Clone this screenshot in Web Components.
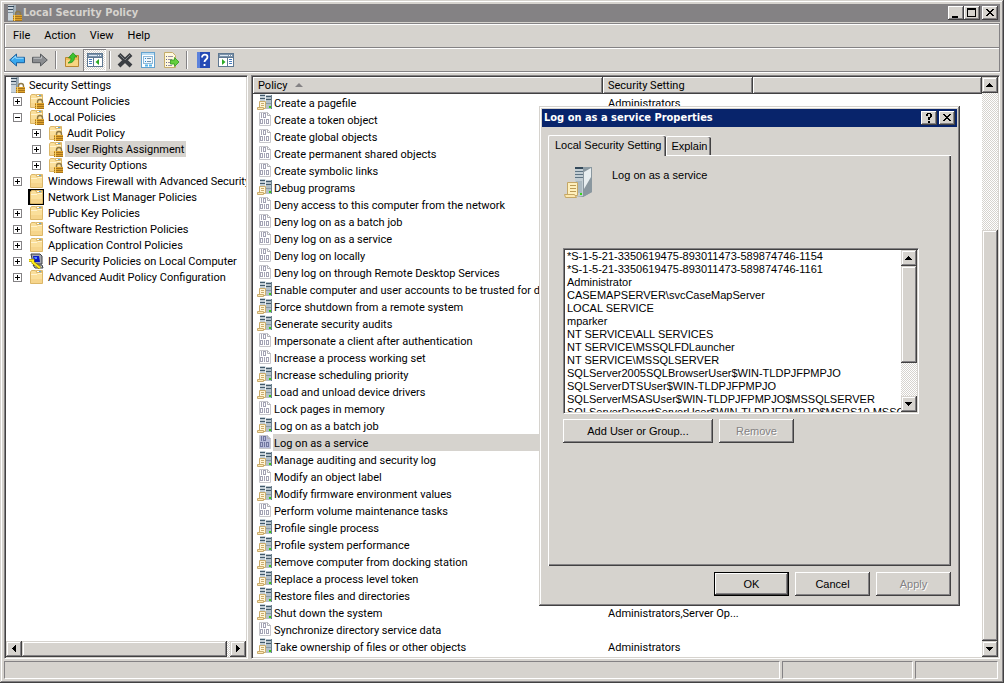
<!DOCTYPE html>
<html lang="en">
<head>
<meta charset="utf-8">
<meta name="viewport" content="width=device-width, initial-scale=1">
<title>Local Security Policy</title>
<style>
  :root {
    --face: #d6d3ce;
    --light: #ffffff;
    --shadow: #848284;
    --dark: #424142;
    --navy: #08246b;
    --checker: repeating-conic-gradient(#d6d3ce 0 25%, #ffffff 0 50%) 0 0 / 2px 2px;
    --raised: inset -1px -1px var(--dark), inset 1px 1px var(--light), inset -2px -2px var(--shadow);
    --thumb: inset -1px -1px var(--dark), inset 1px 1px var(--face), inset -2px -2px var(--shadow), inset 2px 2px var(--light);
    --frame: inset -1px -1px var(--dark), inset 1px 1px var(--face), inset -2px -2px var(--shadow), inset 2px 2px var(--light);
    --ui-font: Tahoma, Roboto, sans-serif;
    --title-font: "DejaVu Sans Condensed", "DejaVu Sans", sans-serif;
    --dialog-font: "Liberation Sans", Arial, sans-serif;
  }
  html, body { height: 100%; }
  body {
    margin: 0;
    font: 11px/16px var(--ui-font);
    color: #000;
    background: var(--face);
    overflow: hidden;
  }
</style>
</head>
<body>
<app-window></app-window>

<script>
const lock = `
  <path d="M9.500 10V9a2.500 2.500 0 0 1 5 0v1" fill="none" stroke="#8f7a48" stroke-width="1.400"/>
  <rect x="7" y="10" width="9" height="6" fill="#dfa32c"/>
  <path d="M7 11.500h9M7 13.500h9M7 15.500h9" stroke="#a8741a"/>
  <path d="M8.500 10v6" stroke="#f7d268"/>`;

const folder = `
  <path d="M2.500 3l1-1.500h4l1 1.500V1.500h6v13h-12z" fill="#fadf9b" stroke="#dcb768"/>
  <path d="M8.500 1.500h5v2h-5z" fill="#fff" stroke="#dcb768"/><path d="M11 2h2v1h-2z" fill="#5aa8e0"/>
  <path d="M3 5.500h6l1-1h4" fill="none" stroke="#fff3cf"/>
  <path d="M3 10h11v4H3z" fill="#f3cf82" opacity=".6"/>`;

const tower = `
  <path d="M2 0h8v15l-3 1H2z" fill="#a3b1bb"/>
  <path d="M2 0h5v15H2z" fill="#c9d3da"/>
  <path d="M2 1.500h6M2 4.500h6" stroke="#33475a"/><path d="M2 7.500h5" stroke="#7b8b98"/>
  <path d="M7.500 2v14" stroke="#8496a2"/>`;

const panel = `
  <rect x=".5" y="1.500" width="15" height="13" fill="#fff" stroke="#5f7891"/>
  <path d="M1 2h14v3H1z" fill="#7b93ab"/><path d="M2 3.500h8" stroke="#dbe7f2"/>
  <path d="M11 3.500h1M13 3.500h1" stroke="#fff"/><path d="M1 5.500h14" stroke="#5f7891"/>`;

const icons = {
  folder,
  folderLock: folder + lock,
  folderBox: `<path d="M0 0h16v16H0z"/>` + folder,
  towerLock: tower + lock,
  server: `
    <path d="M3 0h5v14H3z" fill="#c3ced6"/><path d="M9 1h6v14H9z" fill="#b3c0c9"/>
    <path d="M8.500 0v15" stroke="#e9eef1"/><path d="M14.500 1v14" stroke="#6c808d"/>
    <path d="M3 1.500h5M3 4.500h5M9 2.500h5M9 5.500h5" stroke="#41596a"/>
    <path d="M9 9.500h5" stroke="#8799a5"/><path d="M12 12h2v2h-2z" fill="#39ca13"/>
    <path d="M2.500 7.500h6v7h-6z" fill="#fff4d8" stroke="#c9ab6c"/>
    <path d="M4 9.500h3M4 11.500h3" stroke="#c9ab6c"/>
    <path d="M.5 13.500h6v2h-6z" fill="#fce7b4" stroke="#c9ab6c"/>`,
  binary: `
    <path d="M2.500 1.500h8l3 3v10h-11z" fill="var(--paper, #fff)" stroke="#c6c6cb"/>
    <path d="M10.500 1.500v3h3" fill="none" stroke="#b0b0b6"/>
    <g fill="none" stroke="var(--digit, #a3a3b4)">
      <path d="M4.500 2v5"/><rect x="6.500" y="2.500" width="2" height="4"/>
      <rect x="3.500" y="8.500" width="2" height="4"/><path d="M7.500 8v5"/><rect x="9.500" y="8.500" width="2" height="4"/>
    </g>`,
  ipsec: `
    <path d="M3 1h9l2 2v8H5z" fill="#a4a6ad" stroke="#3e4047"/>
    <path d="M5 3h6l1 6H6z" fill="#0a19c8"/><path d="M6 4h3v2H7z" fill="#4f8cff"/>
    <path d="M5 12h9l1 3H7z" fill="#c9c9cf" stroke="#3e4047"/>
    <path d="M1 7.500h4v2l7 5.500" fill="none" stroke="#8a7500" stroke-width="3"/>
    <path d="M1 7.500h4v2l7 5.500" fill="none" stroke="#ffec1f" stroke-width="2"/>`,
  back: `<path d="M.7 8l6.800-6v3.300h8v5.400h-8V14z" fill="#39a8ee" stroke="#1b609f"/><path d="M3 7.500l3.800-3.300v2h7.700" fill="none" stroke="#a4e1ff"/>`,
  forward: `<path d="M15.300 8L8.500 2v3.300h-8v5.400h8V14z" fill="#8b8d90" stroke="#585b5e"/><path d="M1.500 6.200h8V4.300" fill="none" stroke="#c3c5c8"/>`,
  folderUp: `
    <path d="M1.500 5.500h4l1-2h8v11h-13z" fill="#f0bd55" stroke="#b88633"/><path d="M2 8h12v6H2z" fill="#f8d582"/>
    <path d="M4 11c2-1 3-3 3-5H4.500L9 .8 13 5h-2.500c0 4-2 6-6.500 6z" fill="#3cc431" stroke="#218c1b" stroke-width=".7"/>`,
  treePane: panel + `<path d="M6.500 6v8" stroke="#5f7891"/><path d="M2 7.500h3M2 9.500h3M2 11.500h3" stroke="#4a7dbd"/><path d="M12 7v6L8.500 10z" fill="#2caa25"/>`,
  actionPane: panel + `<path d="M9.500 6v8" stroke="#5f7891"/><path d="M11 7.500h3M11 9.500h3M11 11.500h3" stroke="#4a7dbd"/><path d="M4 7v6l3.500-3z" fill="#2caa25"/>`,
  remove: `<path d="M2 2.500L14 14M14 2.500L2 14" stroke="#3a3d41" stroke-width="4"/><path d="M2.500 2.500l5 5M13 3L8 8" stroke="#7d8287"/>`,
  props: `
    <rect x="1.500" y=".5" width="13" height="15" fill="#fff" stroke="#65a3cf"/>
    <path d="M2 1h12v2H2z" fill="#b9dcf3"/>
    <rect x="3.500" y="4.500" width="9" height="7" fill="#eef7fd" stroke="#8fb9d8"/>
    <path d="M5 6.500h1M5 9.500h1" stroke="#2288dc"/><path d="M7 6.500h4M7 9.500h4" stroke="#7292ad"/>
    <path d="M5 13.500h3M9 13.500h3" stroke="#55b4ea" stroke-width="2"/>`,
  exportList: `
    <path d="M1.500.5h8l3 3v12h-11z" fill="#fff8dd" stroke="#c4ac6a"/>
    <path d="M3 4.500h1M3 7.500h1M3 10.500h1M3 13.500h1" stroke="#6a6a8d"/><path d="M5 4.500h5M5 7.500h4M5 10.500h2M5 13.500h4" stroke="#9a91a8"/>
    <path d="M7.500 8h4V5.500L16 10l-4.500 4.500V12h-4z" fill="#64cf3e" stroke="#31991f" stroke-width=".8"/>`,
  help: `
    <rect x="2" y="0" width="13" height="16" fill="#254bb5"/><path d="M2 0h3v16H2z" fill="#5c82dc"/>
    <path d="M7 5.500C7 1.500 12.500 2 12.500 5c0 2.500-3 2.500-3 5M9.500 12v2" fill="none" stroke="#fff" stroke-width="1.800"/>`,
  bigServer: `
    <path d="M12 2l8-1h9v25l-9 5-8-1z" fill="#8d9ca5"/>
    <path d="M12 1h8v29h-8z" fill="#c2cdd3"/><path d="M20 4l9-3v25l-9 5z" fill="#8a979f"/><path d="M21 6l7-4v9l-7 12z" fill="#e8eef0"/>
    <path d="M12 1h8v2h-8z" fill="#34495a"/><path d="M12 5.500h8M12 8.500h8M12 11.500h8" stroke="#5f7483"/>
    <path d="M13 15h6v12h-6z" fill="#aab8c0"/><path d="M17 27h2v2h-2z" fill="#34d51b"/>
    <path d="M4.500 16.500h10v13h-10z" fill="#fff0bd" stroke="#c5a766"/>
    <path d="M7 19.500h6M7 22.500h6M7 25.500h6" stroke="#bc9b55"/>
    <path d="M1.500 28.500h10l2 3h-11z" fill="#fde8ae" stroke="#c5a766"/>`
};

class WinIcon extends HTMLElement {
  constructor() {
    super();
    this.attachShadow({ mode: 'open' });
  }

  connectedCallback() {
    const size = this.getAttribute('size') || 16;
    this.shadowRoot.innerHTML = `
      <style>
        :host { display: block; flex: none; width: ${size}px; height: ${size}px; }
        svg { display: block; }
      </style>
      <svg width="${size}" height="${size}" viewBox="0 0 ${size} ${size}" aria-hidden="true">${icons[this.getAttribute('name')]}</svg>`;
  }
}
customElements.define('win-icon', WinIcon);

// helper for the elements whose markup never changes
function define(name, html) {
  const template = document.createElement('template');
  template.innerHTML = html;
  customElements.define(name, class extends HTMLElement {
    constructor() {
      super();
      this.attachShadow({ mode: 'open' });
      this.shadowRoot.appendChild(template.content.cloneNode(true));
    }
  });
}

const glyphs = {
  minimize: '<path d="M4 10h6v2H4z"/>',
  maximize: '<path d="M3 2h9v9H3zM4 4v6h7V4z" fill-rule="evenodd"/>',
  close: '<path d="M4 3h2v1h1v1h2V4h1V3h2v1h-1v1h-1v1H9v1h1v1h1v1h1v1h-2V9H9V8H7v1H6v1H4V9h1V8h1V7h1V6H6V5H5V4H4z"/>',
  help: '<path d="M5 3h1V2h4v1h1v3h-1v1H9v2H7V6h2V3H7v2H5zM7 10h2v2H7z"/>'
};

class TitleBar extends HTMLElement {
  constructor() {
    super();
    this.attachShadow({ mode: 'open' });
  }

  connectedCallback() {
    const buttons = this.getAttribute('controls').split(' ').map(name => `
      <button class="${name}" aria-label="${name}"><svg width="16" height="14" shape-rendering="crispEdges">${glyphs[name]}</svg></button>`).join('');
    this.shadowRoot.innerHTML = `
      <style>
        :host {
          display: flex;
          align-items: center;
          gap: 1px;
          height: 18px;
          padding: 0 2px;
          background: var(--title-bg, var(--shadow));
          color: var(--title-color, var(--face));
          font: bold 11px/18px var(--title-font);
        }
        .text { flex: 1; white-space: nowrap; }
        .controls { display: flex; }
        button { width: 16px; height: 14px; padding: 0; border: 0; background: var(--face); box-shadow: var(--raised); }
        .close { margin-left: 2px; }
        svg { display: block; }
      </style>
      <slot name="icon"></slot>
      <span class="text"><slot></slot></span>
      <div class="controls">${buttons}</div>`;
  }
}
customElements.define('title-bar', TitleBar);

class WinScrollbar extends HTMLElement {
  constructor() {
    super();
    this.attachShadow({ mode: 'open' });
  }

  connectedCallback() {
    const horizontal = this.hasAttribute('horizontal');
    const [before, thumb, after] = this.getAttribute('parts').split(' ');
    const first = horizontal ? 'M10 4v7L6 8V7z' : 'M4 10h7L8 6H7z';
    const last = horizontal ? 'M6 4v7l4-3V7z' : 'M4 6h7l-3 4H7z';
    this.shadowRoot.innerHTML = `
      <style>
        :host {
          display: flex;
          flex-direction: ${horizontal ? 'row' : 'column'};
          flex: none;
          ${horizontal ? 'height' : 'width'}: 16px;
          background: var(--checker);
        }
        button { flex: none; width: 16px; height: 16px; padding: 0; border: 0; }
        button, .thumb { background: var(--face); box-shadow: var(--thumb); }
        .before { flex: ${before} 0 0; }
        .thumb { flex: ${thumb} 0 0; }
        .after { flex: ${after} 0 0; }
        svg { display: block; }
      </style>
      <button tabindex="-1" aria-label="Scroll back"><svg width="16" height="16" shape-rendering="crispEdges"><path d="${first}"/></svg></button>
      <div class="before"></div><div class="thumb"></div><div class="after"></div>
      <button tabindex="-1" aria-label="Scroll forward"><svg width="16" height="16" shape-rendering="crispEdges"><path d="${last}"/></svg></button>`;
  }
}
customElements.define('win-scrollbar', WinScrollbar);

define('menu-bar', `
  <style>
    :host { display: flex; height: 23px; padding: 0 1px; border: 1px solid var(--shadow); box-shadow: inset 1px 1px var(--light); }
    button { border: 0; background: none; padding: 0 7px; font: 11px/24px var(--ui-font); color: inherit; }
  </style>
  <button>File</button><button>Action</button><button>View</button><button>Help</button>
`);

define('tool-bar', `
  <style>
    :host { display: flex; align-items: center; height: 23px; border: 1px solid var(--shadow); border-top: 0; box-shadow: inset 1px 1px var(--light), 0 1px var(--light); }
    button { display: grid; place-items: center; width: 23px; height: 22px; padding: 0; border: 0; background: none; }
    .pressed { background: var(--checker); box-shadow: inset 1px 1px var(--shadow), inset -1px -1px var(--light); }
    i { width: 1px; height: 18px; margin: 0 3px; background: var(--shadow); box-shadow: 1px 0 var(--light); }
    .wide { margin: 0 4px; }
  </style>
  <button aria-label="Back"><win-icon name="back"></win-icon></button>
  <button aria-label="Forward"><win-icon name="forward"></win-icon></button>
  <i class="wide"></i>
  <button aria-label="Up One Level"><win-icon name="folderUp"></win-icon></button>
  <button class="pressed" aria-label="Show/Hide Console Tree"><win-icon name="treePane"></win-icon></button>
  <i></i>
  <button aria-label="Delete"><win-icon name="remove"></win-icon></button>
  <button aria-label="Properties"><win-icon name="props"></win-icon></button>
  <button aria-label="Export List"><win-icon name="exportList"></win-icon></button>
  <i class="wide"></i>
  <button aria-label="Help"><win-icon name="help"></win-icon></button>
  <button aria-label="Show/Hide Action Pane"><win-icon name="actionPane"></win-icon></button>
`);

class TreeItem extends HTMLElement {
  constructor() {
    super();
    this.attachShadow({ mode: 'open' });
  }

  connectedCallback() {
    const level = Number(this.getAttribute('level'));
    const state = this.getAttribute('state');
    this.shadowRoot.innerHTML = `
      <style>
        :host { display: flex; height: 16px; padding-left: ${level ? level * 19 - 15 : 3}px; white-space: nowrap; }
        .toggle { flex: none; width: ${level ? 18 : 0}px; display: flex; align-items: center; padding-left: ${level ? 3 : 0}px; box-sizing: border-box; }
        .toggle svg { display: block; }
        .label { padding: 0 2px; margin-left: 2px; line-height: 18px; }
        :host([selected]) .label { background: var(--face); }
      </style>
      <span class="toggle">${state ? `<svg width="9" height="9" shape-rendering="crispEdges">
        <rect x=".5" y=".5" width="8" height="8" fill="#fff" stroke="#848284"/>
        <path d="M2 4.500h5${state === 'closed' ? 'M4.500 2v5' : ''}" stroke="#000"/></svg>` : ''}</span>
      <win-icon name="${this.getAttribute('icon')}"></win-icon>
      <span class="label"><slot></slot></span>`;
  }
}
customElements.define('tree-item', TreeItem);

define('policy-tree', `
  <style>
    :host { display: flex; flex-direction: column; width: 240px; flex: none; overflow: hidden; background: #fff;
      border: 1px solid; border-color: var(--shadow) var(--light) var(--light) var(--shadow); box-shadow: inset 1px 1px var(--dark), inset -1px -1px var(--face); padding: 1px; }
    .items { flex: 1; overflow: hidden; }
  </style>
  <div class="items" role="tree">
    <tree-item level="0" icon="towerLock">Security Settings</tree-item>
    <tree-item level="1" icon="folderLock" state="closed">Account Policies</tree-item>
    <tree-item level="1" icon="folderLock" state="open">Local Policies</tree-item>
    <tree-item level="2" icon="folderLock" state="closed">Audit Policy</tree-item>
    <tree-item level="2" icon="folderLock" state="closed" selected>User Rights Assignment</tree-item>
    <tree-item level="2" icon="folderLock" state="closed">Security Options</tree-item>
    <tree-item level="1" icon="folder" state="closed">Windows Firewall with Advanced Security</tree-item>
    <tree-item level="1" icon="folderBox">Network List Manager Policies</tree-item>
    <tree-item level="1" icon="folder" state="closed">Public Key Policies</tree-item>
    <tree-item level="1" icon="folder" state="closed">Software Restriction Policies</tree-item>
    <tree-item level="1" icon="folder" state="closed">Application Control Policies</tree-item>
    <tree-item level="1" icon="ipsec" state="closed">IP Security Policies on Local Computer</tree-item>
    <tree-item level="1" icon="folder" state="closed">Advanced Audit Policy Configuration</tree-item>
  </div>
  <win-scrollbar horizontal parts="0 205 3"></win-scrollbar>
`);

// [icon, policy, security setting]
const policies = [
  ['server', 'Create a pagefile', 'Administrators'],
  ['binary', 'Create a token object'],
  ['binary', 'Create global objects'],
  ['binary', 'Create permanent shared objects'],
  ['binary', 'Create symbolic links'],
  ['server', 'Debug programs'],
  ['binary', 'Deny access to this computer from the network'],
  ['binary', 'Deny log on as a batch job'],
  ['binary', 'Deny log on as a service'],
  ['binary', 'Deny log on locally'],
  ['binary', 'Deny log on through Remote Desktop Services'],
  ['server', 'Enable computer and user accounts to be trusted for de...'],
  ['server', 'Force shutdown from a remote system'],
  ['server', 'Generate security audits'],
  ['binary', 'Impersonate a client after authentication'],
  ['binary', 'Increase a process working set'],
  ['server', 'Increase scheduling priority'],
  ['server', 'Load and unload device drivers'],
  ['binary', 'Lock pages in memory'],
  ['server', 'Log on as a batch job'],
  ['binary', 'Log on as a service'],
  ['server', 'Manage auditing and security log'],
  ['binary', 'Modify an object label'],
  ['server', 'Modify firmware environment values'],
  ['binary', 'Perform volume maintenance tasks'],
  ['server', 'Profile single process'],
  ['server', 'Profile system performance'],
  ['server', 'Remove computer from docking station'],
  ['server', 'Replace a process level token'],
  ['server', 'Restore files and directories'],
  ['server', 'Shut down the system', 'Administrators,Server Op...'],
  ['binary', 'Synchronize directory service data'],
  ['server', 'Take ownership of files or other objects', 'Administrators']
];
const selectedPolicy = 'Log on as a service';

class PolicyList extends HTMLElement {
  constructor() {
    super();
    this.attachShadow({ mode: 'open' });
  }

  connectedCallback() {
    const rows = policies.map(([icon, name, setting]) => `
      <tr${name === selectedPolicy ? ' class="selected"' : ''}>
        <td><div class="cell"><win-icon name="${icon}"></win-icon><span>${name}</span></div></td>
        <td class="setting"><div class="cell">${setting || ''}</div></td>
        <td></td>
      </tr>`).join('');
    this.shadowRoot.innerHTML = `
      <style>
        :host { display: flex; flex: 1; min-width: 0; overflow: hidden; background: #fff;
          border: 1px solid; border-color: var(--shadow) var(--light) var(--light) var(--shadow); box-shadow: inset 1px 1px var(--dark), inset -1px -1px var(--face); padding: 1px; }
        .view { flex: 1; min-width: 0; overflow: hidden; }
        table { width: 100%; table-layout: fixed; border-collapse: collapse; }
        .policy { width: 350px; }
        .second { width: 150px; }
        th, td { padding: 0; height: 17px; text-align: left; white-space: nowrap; }
        th { font-weight: normal; line-height: 17px; padding-left: 5px; background: var(--face); box-shadow: var(--raised); }
        .sort { display: inline-block; margin: 0 0 2px 8px; border: 4px solid transparent; border-top: 0; border-bottom-color: var(--shadow); vertical-align: middle; }
        .cell { display: flex; height: 17px; padding-left: 4px; overflow: hidden; line-height: 19px; }
        .cell span { padding-left: 1px; flex: 1; overflow: hidden; }
        .setting .cell { padding-left: 5px; }
        .selected span { background: var(--face); }
        .selected win-icon { --paper: #b9bddb; --digit: #70769f; }
      </style>
      <div class="view">
        <table>
          <colgroup><col class="policy"><col class="second"><col></colgroup>
          <thead><tr><th>Policy<i class="sort"></i></th><th>Security Setting</th><th></th></tr></thead>
          <tbody>${rows}</tbody>
        </table>
      </div>
      <win-scrollbar parts="137 410 0"></win-scrollbar>`;
  }
}
customElements.define('policy-list', PolicyList);

define('status-bar', `
  <style>
    :host { display: flex; gap: 2px; height: 18px; padding-right: 2px; }
    div { box-sizing: border-box; border: 1px solid; border-color: var(--shadow) var(--light) var(--light) var(--shadow); }
    .main { flex: 1; }
    .mid { width: 131px; }
    .end { width: 83px; }
  </style>
  <div class="main"></div><div class="mid"></div><div class="end"></div>
`);

define('properties-dialog', `
  <style>
    :host { display: block; box-sizing: border-box; width: 421px; padding: 3px; background: var(--face); box-shadow: var(--frame); font: 11px/13px var(--dialog-font);
      --title-bg: var(--navy); --title-color: #fff; }
    .body { padding: 8px 6px 7px; }
    .tabs { display: flex; align-items: flex-end; }
    .tabs button { position: relative; height: 19px; padding: 0 4px; border: 0; border-top: 1px solid var(--light); border-left: 1px solid var(--light); border-radius: 2px 2px 0 0;
      background: var(--face); box-shadow: inset -1px 0 var(--dark), inset -2px 0 var(--shadow); font: inherit; color: inherit; }
    .tabs .active { height: 21px; margin-bottom: -1px; padding: 0 5px 2px 6px; z-index: 1; }
    .page { padding: 10px 32px 123px 14px; border-top: 1px solid var(--light); border-left: 1px solid var(--light);
      box-shadow: inset -1px -1px var(--dark), inset -2px -2px var(--shadow); }
    .head { display: flex; gap: 17px; height: 82px; }
    .head p { margin: 3px 0 0; }
    .list { display: flex; height: 162px; padding: 1px; border: 1px solid; border-color: var(--shadow) var(--light) var(--light) var(--shadow);
      background: #fff; box-shadow: inset 1px 1px var(--dark), inset -1px -1px var(--face); }
    ul { flex: 1; min-width: 0; margin: 0; padding: 0 0 0 2px; list-style: none; overflow: hidden; white-space: nowrap; }
    .row { display: flex; gap: 6px; margin-top: 5px; }
    .actions { display: flex; justify-content: flex-end; gap: 6px; margin-top: 6px; }
    .push { width: 75px; height: 24px; padding: 0; border: 0; background: var(--face); box-shadow: var(--raised); font: inherit; color: inherit; }
    .wide { width: 150px; }
    .default { border: 1px solid #000; }
    .push:disabled { color: var(--shadow); text-shadow: 1px 1px var(--light); }
  </style>
  <title-bar controls="help close">Log on as a service Properties</title-bar>
  <div class="body">
    <div class="tabs" role="tablist">
      <button class="active" role="tab" aria-selected="true">Local Security Setting</button>
      <button role="tab" aria-selected="false">Explain</button>
    </div>
    <div class="page" role="tabpanel">
      <div class="head"><win-icon name="bigServer" size="32"></win-icon><p>Log on as a service</p></div>
      <div class="list">
        <ul>
          <li>*S-1-5-21-3350619475-893011473-589874746-1154</li>
          <li>*S-1-5-21-3350619475-893011473-589874746-1161</li>
          <li>Administrator</li>
          <li>CASEMAPSERVER\\svcCaseMapServer</li>
          <li>LOCAL SERVICE</li>
          <li>mparker</li>
          <li>NT SERVICE\\ALL SERVICES</li>
          <li>NT SERVICE\\MSSQLFDLauncher</li>
          <li>NT SERVICE\\MSSQLSERVER</li>
          <li>SQLServer2005SQLBrowserUser$WIN-TLDPJFPMPJO</li>
          <li>SQLServerDTSUser$WIN-TLDPJFPMPJO</li>
          <li>SQLServerMSASUser$WIN-TLDPJFPMPJO$MSSQLSERVER</li>
          <li>SQLServerReportServerUser$WIN-TLDPJFPMPJO$MSRS10.MSSQL</li>
        </ul>
        <win-scrollbar parts="0 98 33"></win-scrollbar>
      </div>
      <div class="row">
        <button class="push wide">Add User or Group...</button>
        <button class="push" disabled>Remove</button>
      </div>
    </div>
    <div class="actions">
      <button class="push default">OK</button>
      <button class="push">Cancel</button>
      <button class="push" disabled>Apply</button>
    </div>
  </div>
`);

define('app-window', `
  <style>
    :host { display: flex; flex-direction: column; box-sizing: border-box; height: 100vh; padding: 4px; background: var(--face); box-shadow: var(--frame); }
    menu-bar { margin-top: 1px; }
    .panes { flex: 1; min-height: 0; display: flex; gap: 3px; margin: 3px 0 2px; }
    /* the dialog floats over the console */
    properties-dialog { position: absolute; top: 106px; right: 44px; }
  </style>
  <title-bar controls="minimize maximize close"><win-icon slot="icon" name="towerLock"></win-icon>Local Security Policy</title-bar>
  <menu-bar></menu-bar>
  <tool-bar></tool-bar>
  <div class="panes">
    <policy-tree></policy-tree>
    <policy-list></policy-list>
  </div>
  <status-bar></status-bar>
  <properties-dialog></properties-dialog>
`);
</script>
</body>
</html>
